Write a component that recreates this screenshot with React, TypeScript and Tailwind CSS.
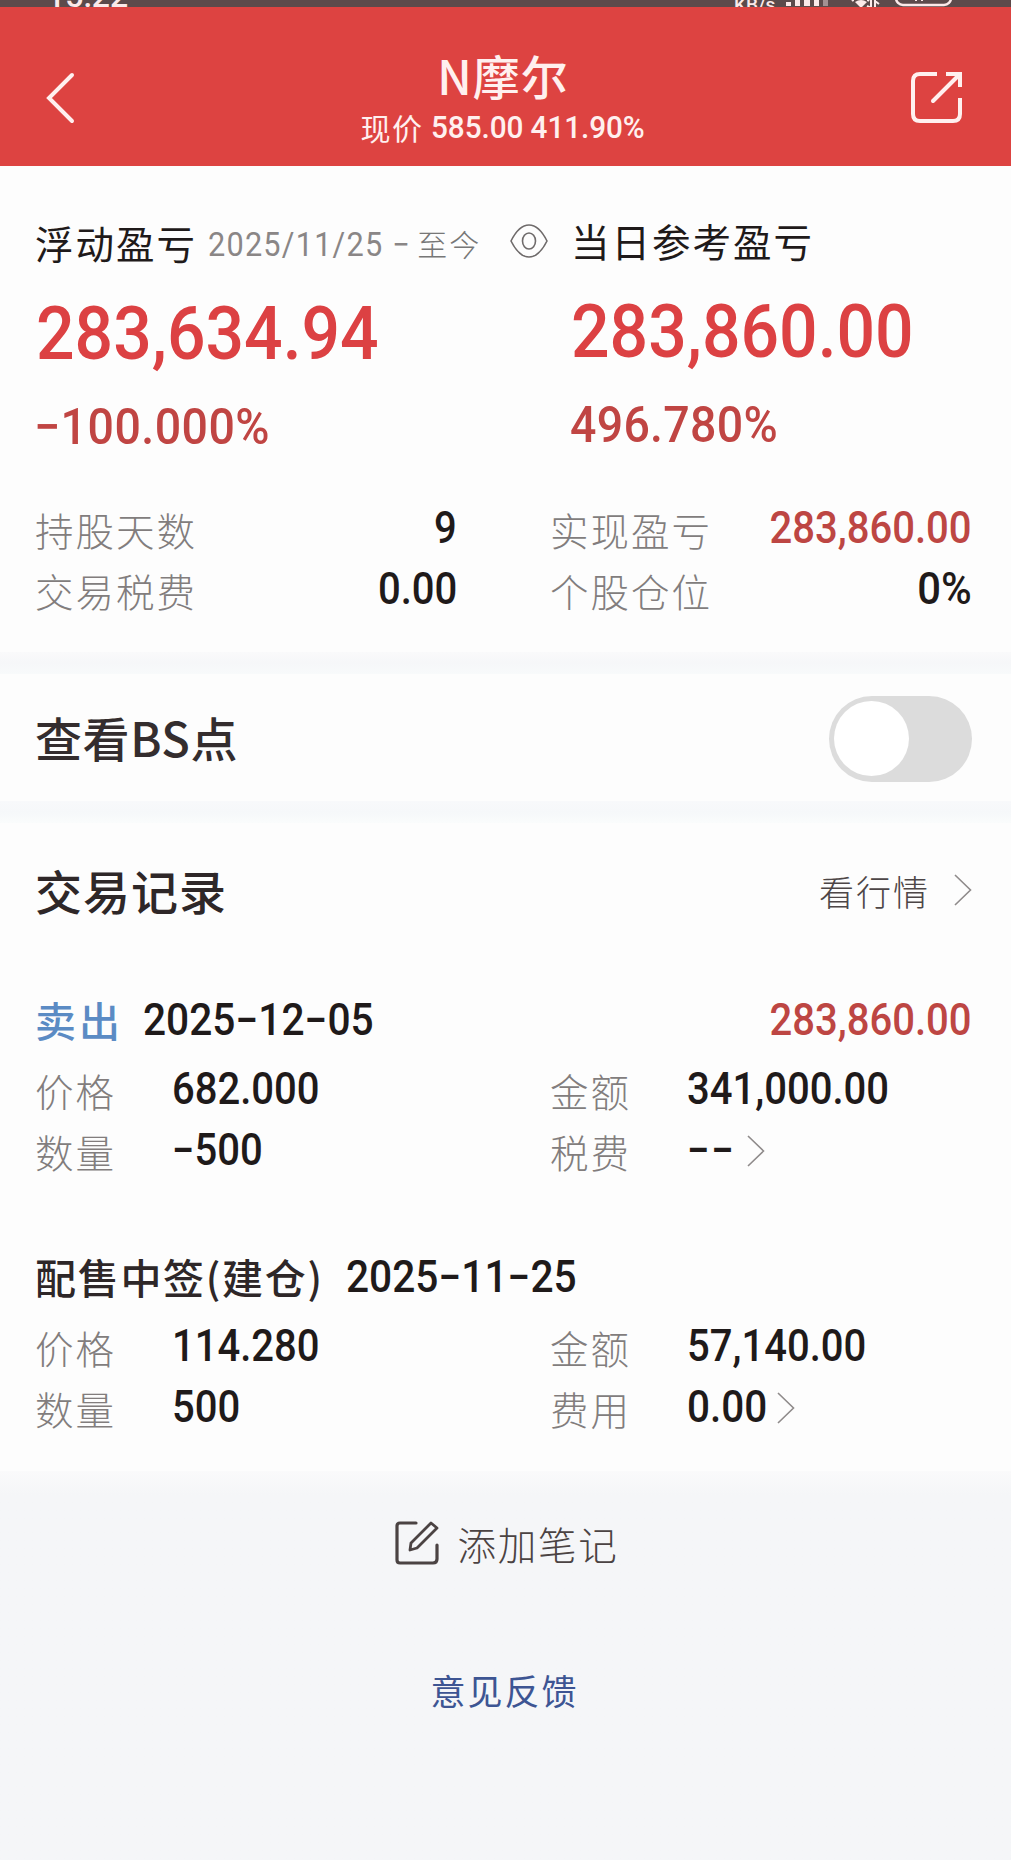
import type { ReactNode } from 'react';
import clsx from 'clsx';

const records = [
    {
        type: '卖出',
        typeClass: 'text-[#5b8bc4] tracking-[3px]',
        date: '2025−12−05',
        dateClass: 'ml-5',
        profit: '283,860.00',
        price: '682.000',
        amount: '341,000.00',
        count: '−500',
        feeLabel: '税费',
        fee: '−−',
        feeClass: 'tracking-[1.5px]',
    },
    {
        type: '配售中签(建仓)',
        typeClass: 'text-[#2e2728] tracking-[1.7px]',
        date: '2025−11−25',
        dateClass: 'ml-[22px]',
        profit: '',
        price: '114.280',
        amount: '57,140.00',
        count: '500',
        feeLabel: '费用',
        fee: '0.00',
        feeClass: 'mr-[-4px]',
    },
];

// Narrow figures, squeezed towards the side they are aligned to
function Num({ children, className, right }: { children: ReactNode; className?: string; right?: boolean }) {
    return (
        <span
            className={clsx(
                'inline-block whitespace-nowrap font-["Roboto",sans-serif] leading-none',
                right ? 'origin-right' : 'origin-left',
                className
            )}
        >
            {children}
        </span>
    );
}

function Label({ children, className }: { children: ReactNode; className?: string }) {
    return (
        <span className={clsx('ml-[-1px] pt-[3px] text-[38.5px] font-light leading-none tracking-[2px] text-[#827d7d]', className)}>
            {children}
        </span>
    );
}

function Chevron({ className }: { className?: string }) {
    return (
        <svg viewBox="0 0 18 32" className={clsx('h-8 w-[18px]', className)} fill="none" stroke="#8f8b8b" strokeWidth="1.6">
            <path d="M1 1l15.5 15L1 31" />
        </svg>
    );
}

function StatusBar() {
    return (
        <div className="flex h-[7px] items-end bg-[#5c4a4b] text-[#fbe9e9]">
            <span className="ml-[47px] mb-[-5px] w-[100px] font-['Roboto',sans-serif] text-[32px] font-medium leading-none">15:22</span>
            <span className="ml-[587px] mb-[-7px] w-[52px] font-['Roboto',sans-serif] text-[19px] font-medium leading-none">KB/s</span>
            <svg viewBox="0 0 170 30" className="h-[30px] w-[170px] shrink-0 mb-[-3px]" fill="currentColor">
                <path d="M0 22h5v4H0zM9 18h5v8H9zM18 14h6v12h-6zM28 10h5v16h-5z" />
                <path d="M37 6h5v20h-5z" opacity="0.45" />
                <path d="M69 22q6-4 12 0l-6 6z" />
                <path d="M66 21q1-1 2-1M81 20q1 0 2 1" fill="none" stroke="currentColor" strokeWidth="2" />
                <path d="M85 20v8M89 20v8M81 26l4 2M89 21l4 3" stroke="currentColor" strokeWidth="2" />
                <rect x="110" y="2" width="55" height="23" rx="7" fill="none" stroke="currentColor" strokeWidth="2.5" />
                <path d="M129 20h2M135 20h2" stroke="currentColor" strokeWidth="2" />
            </svg>
        </div>
    );
}

function Header() {
    return (
        <header className="flex h-[159px] items-center justify-between bg-[#dd4341] pl-[45px] pr-[45px] text-[#fff0ef]">
            <svg viewBox="0 0 30 54" className="mt-[22px] h-[54px] w-[55px]" fill="none" stroke="currentColor" strokeWidth="4" strokeLinecap="round" preserveAspectRatio="xMinYMid meet">
                <path d="M27 4L4 27l23 23" />
            </svg>
            <div className="ml-[-3px] flex flex-col items-center pt-[27px]">
                <h1 className="text-[47px] font-medium leading-[54px] tracking-[1px]">N摩尔</h1>
                <div className="flex h-[50px] items-center">
                    <span className="mr-[7px] text-[30px] leading-none tracking-[1.5px]">现价</span>
                    <Num className="mr-[-15px] scale-x-[0.93] text-[32px] font-medium tracking-[-0.1px]">585.00 411.90%</Num>
                </div>
            </div>
            <svg viewBox="0 0 55 55" className="mr-0.5 mt-[22px] h-[55px] w-[55px]" fill="none" stroke="currentColor" strokeWidth="4" strokeLinecap="square" strokeLinejoin="round">
                <path d="M26 4H11Q4 4 4 11V44Q4 51 11 51H44Q51 51 51 44V30" />
                <path d="M39 4H51V15" strokeLinejoin="miter" />
                <path d="M50 5L24 31" strokeLinecap="round" />
            </svg>
        </header>
    );
}

function Summary() {
    return (
        <section className="h-[486px] pl-9 pr-[39px]">
            <div className="flex">
                <div className="w-[536px] pt-9">
                    <div className="flex h-20 items-center">
                        <span className="ml-[-1px] text-[38.5px] leading-none tracking-[2px]">浮动盈亏</span>
                        <Num className="ml-[11px] mr-[-9px] pt-1 scale-x-[0.93] text-[33px] font-normal tracking-[1.3px] text-[#8a8686]">2025/11/25 −</Num>
                        <span className="pt-0.5 text-[30px] font-light leading-none tracking-[2px] text-[#777]">至今</span>
                        <svg viewBox="0 0 38 34" className="ml-auto mr-[24px] mt-[-2px] h-[34px] w-[38px]" fill="none" stroke="#6f6b6b" strokeWidth="1.6">
                            <path d="M1 17C4 11 10 1 19 1S34 11 37 17C34 23 28 33 19 33S4 23 1 17z" />
                            <ellipse cx="19" cy="17" rx="6.5" ry="8" />
                        </svg>
                    </div>
                    <div className="flex h-[102px] items-center text-[#dc4143]">
                        <Num className="scale-x-[0.905] text-[75px] font-medium">283,634.94</Num>
                    </div>
                    <div className="flex h-[82px] items-center text-[#c04543]">
                        <Num className="ml-[-2px] mt-1 scale-x-[0.93] text-[50px] font-medium tracking-[0.5px]">−100.000%</Num>
                    </div>
                </div>
                <div className="pt-[34px]">
                    <div className="flex h-20 items-center">
                        <span className="ml-[-1px] text-[38.5px] leading-none tracking-[2px]">当日参考盈亏</span>
                    </div>
                    <div className="flex h-[102px] items-center text-[#dc4143]">
                        <Num className="ml-[-1px] scale-x-[0.905] text-[75px] font-medium">283,860.00</Num>
                    </div>
                    <div className="flex h-[82px] items-center text-[#c04543]">
                        <Num className="ml-[-2px] mt-1 scale-x-[0.93] text-[50px] font-medium tracking-[0.3px]">496.780%</Num>
                    </div>
                </div>
            </div>
            <div className="mt-[31px] flex justify-between">
                <div className="w-[421px]">
                    <div className="flex h-[61px] items-center justify-between">
                        <Label>持股天数</Label>
                        <Num right className="mt-0.5 scale-x-[0.92] text-[43.5px] font-medium">9</Num>
                    </div>
                    <div className="flex h-[61px] items-center justify-between">
                        <Label>交易税费</Label>
                        <Num right className="mt-0.5 scale-x-[0.92] text-[43.5px] font-medium">0.00</Num>
                    </div>
                </div>
                <div className="w-[421px]">
                    <div className="flex h-[61px] items-center justify-between">
                        <Label>实现盈亏</Label>
                        <Num right className="mt-0.5 scale-x-[0.92] text-[43.5px] font-medium text-[#bd4643]">283,860.00</Num>
                    </div>
                    <div className="flex h-[61px] items-center justify-between">
                        <Label>个股仓位</Label>
                        <Num right className="mt-0.5 scale-x-[0.96] text-[43.5px] font-medium">0%</Num>
                    </div>
                </div>
            </div>
        </section>
    );
}

function Records() {
    return (
        <section className="h-[648px] pl-9 pr-[39px]">
            <div className="flex h-[136px] items-center justify-between">
                <h2 className="ml-[-1px] mt-[-3px] text-[47px] font-medium leading-none tracking-[1px] text-[#2e2728]">交易记录</h2>
                <div className="mt-[-2px] flex items-center">
                    <span className="mr-6 text-[35px] font-light leading-none tracking-[2px] text-[#4d4647]">看行情</span>
                    <Chevron />
                </div>
            </div>
            <div className="flex flex-col gap-[58px] pt-[22px]">
                {records.map((r) => (
                    <div key={r.date}>
                        <div className="flex h-[77px] items-center">
                            <span className={clsx('ml-[-1px] text-[41px] font-medium leading-none', r.typeClass)}>{r.type}</span>
                            <Num className={clsx('mt-0.5 scale-x-[0.935] text-[43.5px] font-medium', r.dateClass)}>{r.date}</Num>
                            {r.profit && (
                                <Num right className="ml-auto mt-0.5 scale-x-[0.92] text-[43.5px] font-medium text-[#bd4643]">{r.profit}</Num>
                            )}
                        </div>
                        <div className="flex h-[61px] items-center">
                            <Label className="w-[137px]">价格</Label>
                            <Num className="mt-0.5 w-[379px] scale-x-[0.92] text-[43.5px] font-medium">{r.price}</Num>
                            <Label className="w-[137px]">金额</Label>
                            <Num className="mt-0.5 scale-x-[0.92] text-[43.5px] font-medium">{r.amount}</Num>
                        </div>
                        <div className="flex h-[61px] items-center">
                            <Label className="w-[137px]">数量</Label>
                            <Num className="mt-0.5 w-[379px] scale-x-[0.92] text-[43.5px] font-medium">{r.count}</Num>
                            <Label className="w-[137px]">{r.feeLabel}</Label>
                            <Num className={clsx('mt-0.5 scale-x-[0.93] text-[43.5px] font-medium', r.feeClass)}>{r.fee}</Num>
                            <Chevron className="ml-2 mt-0.5" />
                        </div>
                    </div>
                ))}
            </div>
        </section>
    );
}

export default function App() {
    return (
        <div className='flex h-[1860px] w-[1011px] flex-col overflow-hidden bg-[#fdfdfd] font-["Noto_Sans_CJK_SC",sans-serif] text-[#1f1a1a]'>
            <StatusBar />
            <Header />
            <Summary />
            <div className="h-[22px] bg-linear-to-b from-[#fafafb] via-[#f6f7f9] to-[#f8fafb]" />
            <section className="flex h-[127px] items-center justify-between pl-[35px] pr-[39px]">
                <span className="mt-[-2px] text-[47px] font-medium leading-none tracking-[0.6px] text-[#342d2e]">查看BS点</span>
                <button className="mt-[2px] flex h-[86px] w-[143px] items-center rounded-full bg-[#dcdcdc] pl-[5px]">
                    <span className="size-[75px] rounded-full bg-white" />
                </button>
            </section>
            <div className="h-[22px] bg-linear-to-b from-[#f8f9fb] via-[#f6f8fa] to-[#fafcfc]" />
            <Records />
            <footer className="flex flex-1 flex-col items-center bg-linear-to-b from-[#fafafb] to-[#f5f6f8] to-[24px] pt-[49px]">
                <div className="ml-[3px] flex h-[46px] items-center">
                    <svg viewBox="0 0 44 44" className="mr-[18px] h-11 w-11" fill="none" stroke="#4b4343" strokeWidth="3.2" strokeLinecap="round" strokeLinejoin="round">
                        <path d="M21 2H5Q2 2 2 5V39Q2 42 5 42H38Q42 42 42 38V24" />
                        <path d="M15 29L16 22L36 2L42 7L22 27z" strokeWidth="2.8" />
                    </svg>
                    <span className="text-[38.5px] font-light leading-none tracking-[1.8px] text-[#4b4343]">添加笔记</span>
                </div>
                <a className="ml-[-2px] mt-[106px] text-[35px] leading-none tracking-[2px] text-[#3d5593]">意见反馈</a>
            </footer>
        </div>
    );
}
